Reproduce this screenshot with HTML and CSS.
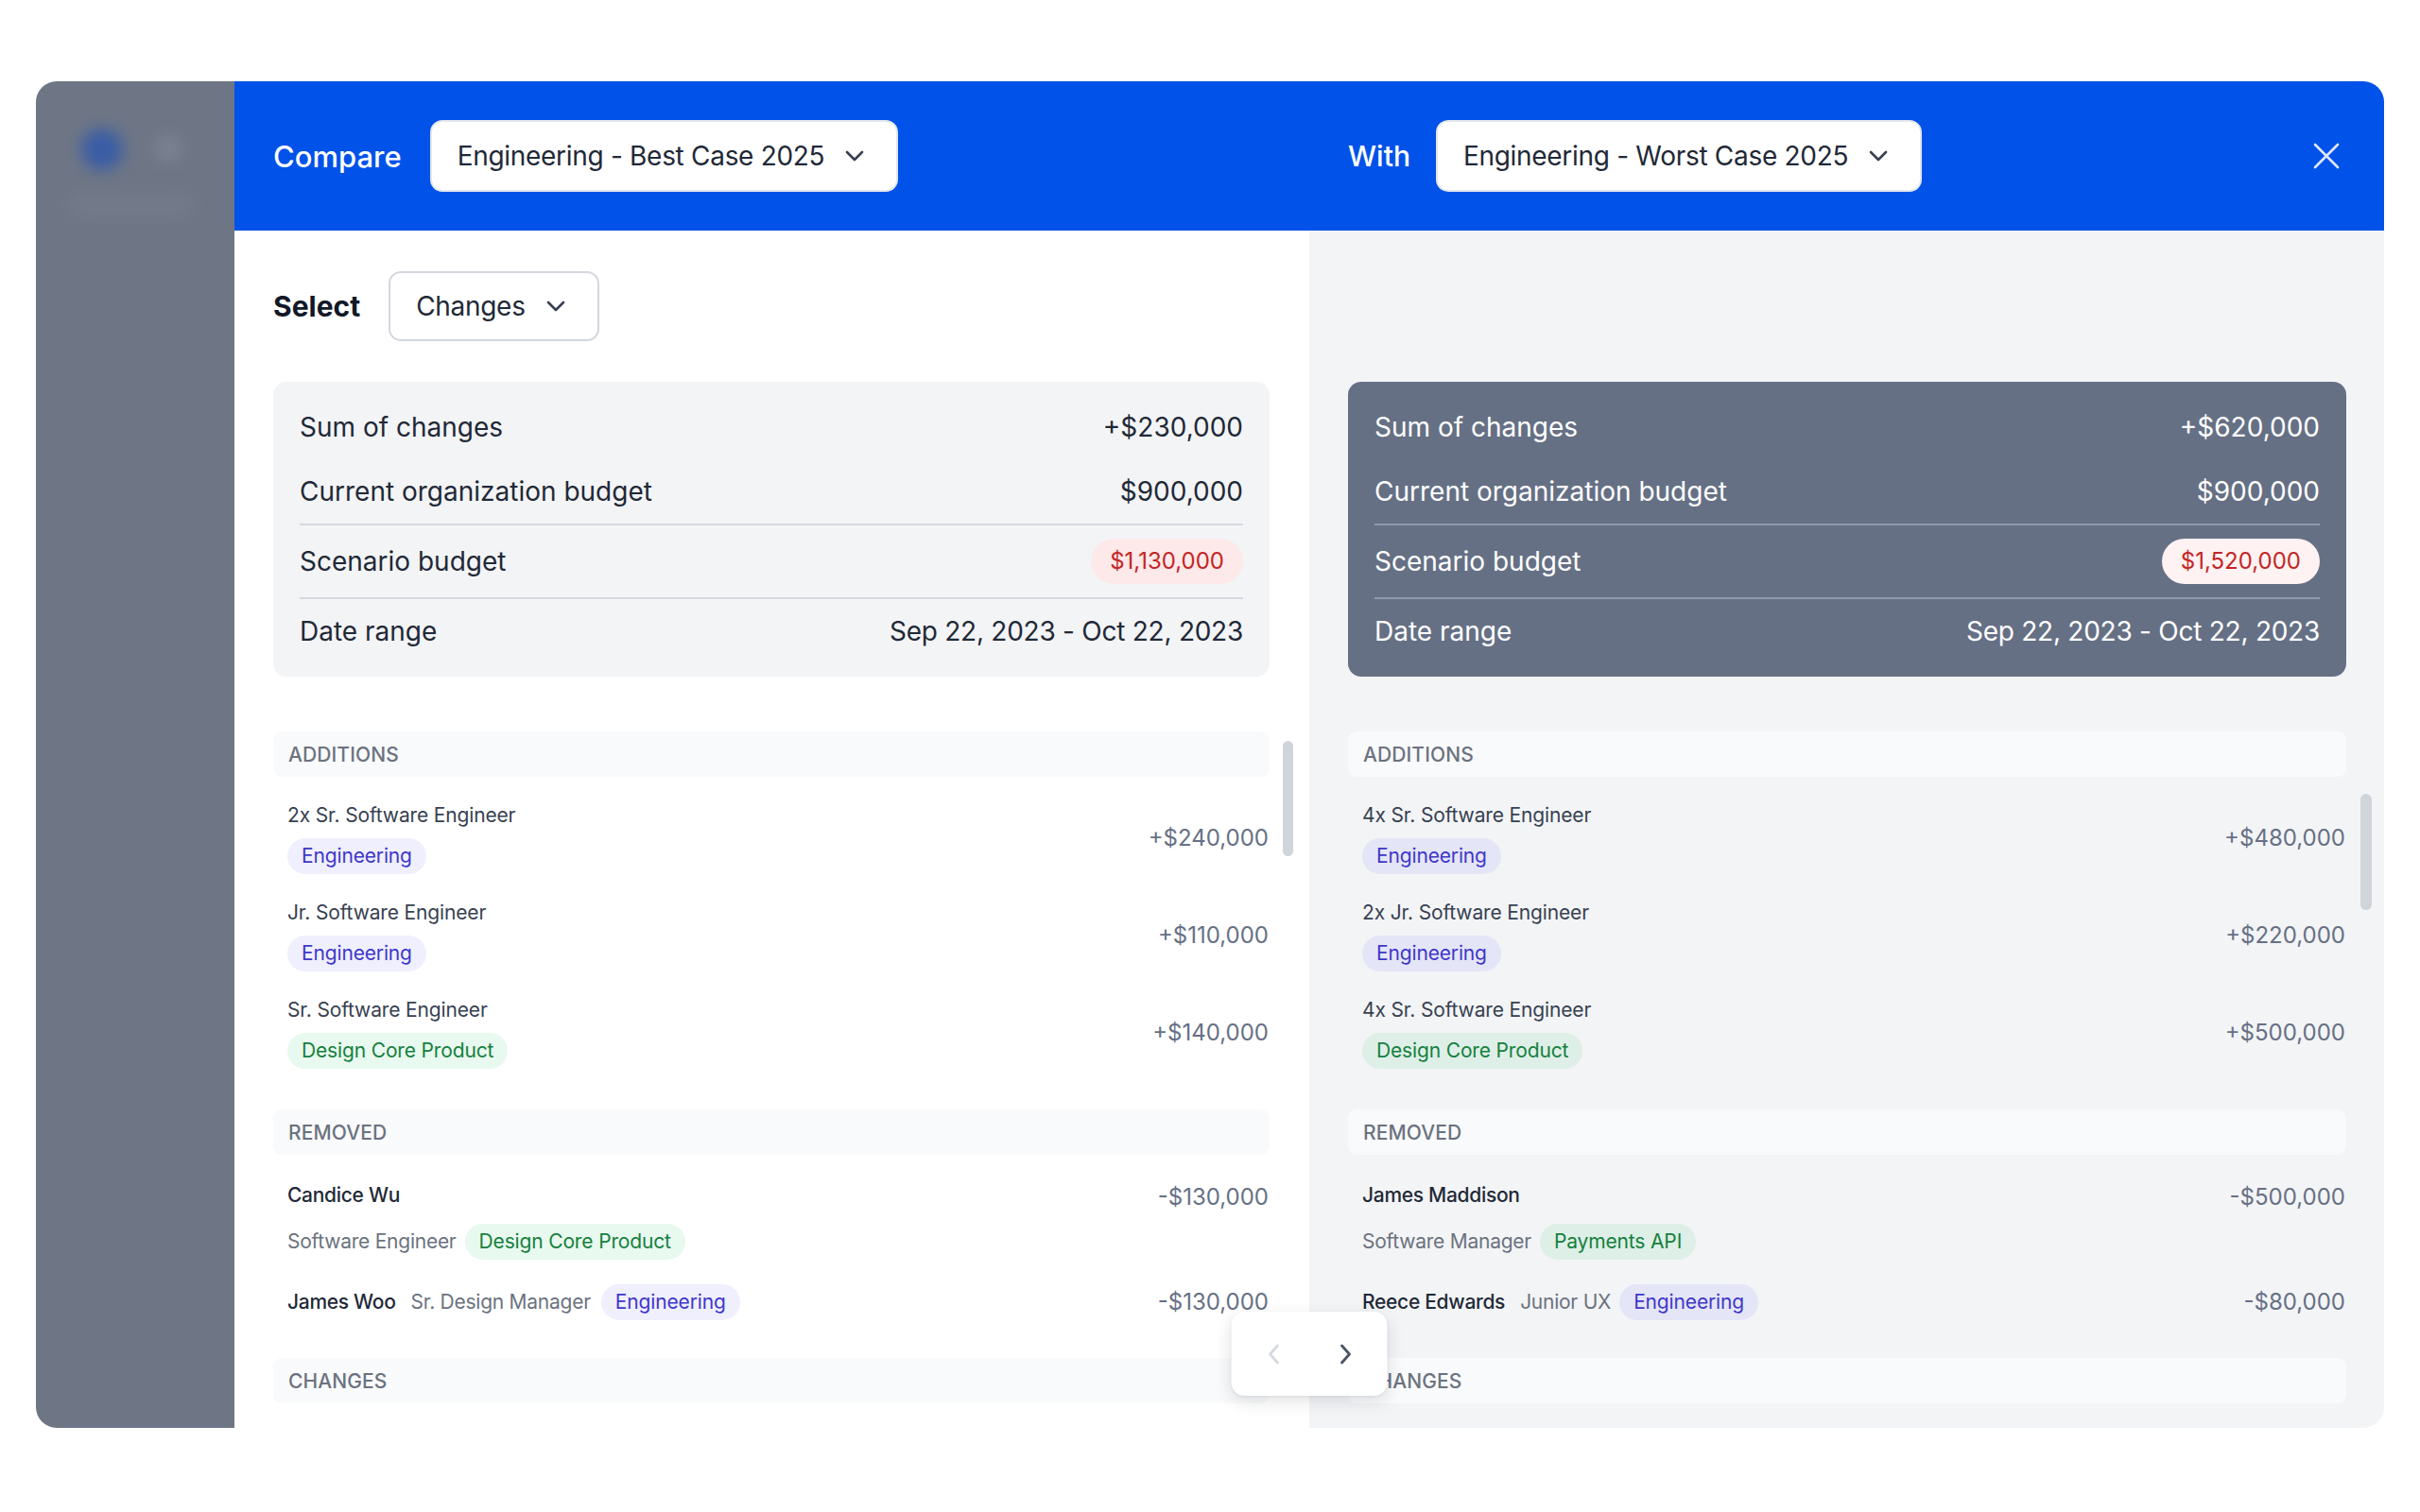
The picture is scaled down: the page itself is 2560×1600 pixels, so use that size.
FILE: index.html
```html
<!DOCTYPE html>
<html lang="en">
<head>
<meta charset="utf-8">
<title>Compare scenarios</title>
<link rel="stylesheet" href="styles.css">
</head>
<body>
<div class="page">
  <div class="frame">
    <aside class="sidebar">
      <span class="blob blob-blue"></span>
      <span class="blob blob-gray"></span>
      <span class="blob-bar"></span>
    </aside>
    <section class="modal">
      <header class="modal-header">
        <div class="hdr-half">
          <span class="hdr-label">Compare</span>
          <button class="dropdown dropdown-lg">
            <span>Engineering - Best Case 2025</span>
            <svg class="chev" viewBox="0 0 20 12" width="20" height="12"><path d="M2 2l8 8 8-8"/></svg>
          </button>
        </div>
        <div class="hdr-half hdr-half-right">
          <span class="hdr-label hdr-label-sm">With</span>
          <button class="dropdown dropdown-lg">
            <span>Engineering - Worst Case 2025</span>
            <svg class="chev" viewBox="0 0 20 12" width="20" height="12"><path d="M2 2l8 8 8-8"/></svg>
          </button>
          <span class="hdr-spacer"></span>
          <svg class="close" viewBox="0 0 28 28" width="28" height="28"><path d="M2 2L26 26M26 2L2 26"/></svg>
        </div>
      </header>

      <div class="modal-body">
        <div class="col col-left">
          <div class="select-row">
            <span class="select-label">Select</span>
            <button class="dropdown">
              <span>Changes</span>
              <svg class="chev" viewBox="0 0 20 12" width="20" height="12"><path d="M2 2l8 8 8-8"/></svg>
            </button>
          </div>

          <div class="summary">
            <div class="sum-row"><span>Sum of changes</span><span>+$230,000</span></div>
            <div class="sum-row"><span>Current organization budget</span><span>$900,000</span></div>
            <div class="sum-row sep"><span>Scenario budget</span><span class="badge">$1,130,000</span></div>
            <div class="sum-row sep"><span>Date range</span><span class="date">Sep 22, 2023 - Oct 22, 2023</span></div>
          </div>

          <div class="lists">
            <div class="section">
              <div class="section-title">Additions</div>
              <div class="items">
                <div class="item">
                  <div class="item-main">
                    <div class="item-title">2x Sr. Software Engineer</div>
                    <div><span class="tag tag-blue">Engineering</span></div>
                  </div>
                  <span class="value">+$240,000</span>
                </div>
                <div class="item">
                  <div class="item-main">
                    <div class="item-title">Jr. Software Engineer</div>
                    <div><span class="tag tag-blue">Engineering</span></div>
                  </div>
                  <span class="value">+$110,000</span>
                </div>
                <div class="item">
                  <div class="item-main">
                    <div class="item-title">Sr. Software Engineer</div>
                    <div><span class="tag tag-green">Design Core Product</span></div>
                  </div>
                  <span class="value">+$140,000</span>
                </div>
              </div>
            </div>

            <div class="section">
              <div class="section-title">Removed</div>
              <div class="items items-removed">
                <div class="item item-top">
                  <div class="item-main">
                    <div class="person">Candice Wu</div>
                    <div class="meta-line"><span class="role">Software Engineer</span><span class="tag tag-green">Design Core Product</span></div>
                  </div>
                  <span class="value value-top">-$130,000</span>
                </div>
                <div class="item">
                  <div class="inline-line">
                    <span class="person">James Woo</span><span class="role">Sr. Design Manager</span><span class="tag tag-blue">Engineering</span>
                  </div>
                  <span class="value">-$130,000</span>
                </div>
              </div>
            </div>

            <div class="section">
              <div class="section-title">Changes</div>
            </div>
          </div>
          <span class="thumb thumb-left"></span>
        </div>

        <div class="col col-right">
          <div class="select-row"></div>

          <div class="summary summary-dark">
            <div class="sum-row"><span>Sum of changes</span><span>+$620,000</span></div>
            <div class="sum-row"><span>Current organization budget</span><span>$900,000</span></div>
            <div class="sum-row sep"><span>Scenario budget</span><span class="badge badge-light">$1,520,000</span></div>
            <div class="sum-row sep"><span>Date range</span><span class="date">Sep 22, 2023 - Oct 22, 2023</span></div>
          </div>

          <div class="lists">
            <div class="section">
              <div class="section-title">Additions</div>
              <div class="items">
                <div class="item">
                  <div class="item-main">
                    <div class="item-title">4x Sr. Software Engineer</div>
                    <div><span class="tag tag-blue">Engineering</span></div>
                  </div>
                  <span class="value">+$480,000</span>
                </div>
                <div class="item">
                  <div class="item-main">
                    <div class="item-title">2x Jr. Software Engineer</div>
                    <div><span class="tag tag-blue">Engineering</span></div>
                  </div>
                  <span class="value">+$220,000</span>
                </div>
                <div class="item">
                  <div class="item-main">
                    <div class="item-title">4x Sr. Software Engineer</div>
                    <div><span class="tag tag-green">Design Core Product</span></div>
                  </div>
                  <span class="value">+$500,000</span>
                </div>
              </div>
            </div>

            <div class="section">
              <div class="section-title">Removed</div>
              <div class="items items-removed">
                <div class="item item-top">
                  <div class="item-main">
                    <div class="person">James Maddison</div>
                    <div class="meta-line"><span class="role">Software Manager</span><span class="tag tag-green">Payments API</span></div>
                  </div>
                  <span class="value value-top">-$500,000</span>
                </div>
                <div class="item">
                  <div class="inline-line">
                    <span class="person">Reece Edwards</span><span class="role role-tight">Junior UX</span><span class="tag tag-blue">Engineering</span>
                  </div>
                  <span class="value">-$80,000</span>
                </div>
              </div>
            </div>

            <div class="section">
              <div class="section-title">Changes</div>
            </div>
          </div>
          <span class="thumb thumb-right"></span>
        </div>

        <div class="pager">
          <svg class="pager-chev disabled" viewBox="0 0 14 22" width="14" height="22"><path d="M11 2L3 11l8 9"/></svg>
          <svg class="pager-chev" viewBox="0 0 14 22" width="14" height="22"><path d="M3 2l8 9-8 9"/></svg>
        </div>
      </div>
    </section>
  </div>
</div>
</body>
</html>
```

FILE: styles.css
```css
* { box-sizing: border-box; }

html, body {
  margin: 0;
  padding: 0;
  background: #ffffff;
  font-family: Inter, "Noto Sans", "Liberation Sans", sans-serif;
  color: #1f2937;
}

.page {
  width: 2560px;
  height: 1600px;
  padding: 86px 38px 0 38px;
}

.frame {
  display: flex;
  height: 1425px;
  border-radius: 22px;
  overflow: hidden;
}

/* ---------- dimmed app sidebar ---------- */
.sidebar {
  width: 210px;
  flex: none;
  background: #6e7686;
  position: relative;
  overflow: hidden;
}
.blob {
  position: absolute;
  border-radius: 50%;
  filter: blur(8px);
}
.blob-blue {
  left: 48px;
  top: 50px;
  width: 44px;
  height: 44px;
  background: #3a5da6;
}
.blob-gray {
  left: 125px;
  top: 56px;
  width: 30px;
  height: 30px;
  background: #7a8291;
}
.blob-bar {
  position: absolute;
  left: 36px;
  top: 118px;
  width: 130px;
  height: 26px;
  background: #737b8a;
  filter: blur(9px);
}

/* ---------- modal ---------- */
.modal {
  flex: 1;
  display: flex;
  flex-direction: column;
  min-width: 0;
}

.modal-header {
  height: 158px;
  flex: none;
  background: #0152e9;
  display: grid;
  grid-template-columns: 1fr 1fr;
}
.hdr-half {
  display: flex;
  align-items: center;
  gap: 30px;
  padding-left: 41px;
  padding-right: 47px;
}
.hdr-half-right { gap: 27px; }
.hdr-label {
  color: #ffffff;
  font-size: 31px;
  font-weight: 500;
}
.hdr-label-sm { font-size: 30px; }
.hdr-spacer { flex: 1; }
.close {
  fill: none;
  stroke: #dfe7ff;
  stroke-width: 2.6;
  stroke-linecap: round;
}

.dropdown {
  display: inline-flex;
  align-items: center;
  gap: 22px;
  height: 74px;
  padding: 0 34px 0 27px;
  background: #ffffff;
  border: 2px solid #d3d7de;
  border-radius: 13px;
  font-family: inherit;
  font-size: 28px;
  font-weight: 400;
  letter-spacing: -0.3px;
  color: #1f2937;
  cursor: pointer;
}
.dropdown-lg {
  height: 76px;
  border-color: #e3e6ec;
}
.chev {
  fill: none;
  stroke: #374151;
  stroke-width: 2.6;
  stroke-linecap: round;
  stroke-linejoin: round;
}

/* ---------- body columns ---------- */
.modal-body {
  flex: 1;
  display: grid;
  grid-template-columns: 1fr 1fr;
  position: relative;
  min-height: 0;
}
.col {
  position: relative;
  overflow: hidden;
  padding: 0 42px 0 41px;
}
.col-left { background: #ffffff; }
.col-right { background: #f3f4f6; padding-right: 40px; }

.select-row {
  margin-top: 43px;
  height: 74px;
  display: flex;
  align-items: center;
  gap: 30px;
}
.select-label {
  font-size: 30px;
  font-weight: 700;
  color: #111827;
}

/* ---------- summary card ---------- */
.summary {
  margin-top: 43px;
  background: #f3f4f6;
  border-radius: 14px;
  padding: 14px 28px;
}
.sum-row {
  display: flex;
  justify-content: space-between;
  align-items: center;
  padding: 14px 0;
  font-size: 28px;
  line-height: 40px;
  color: #1f2937;
}
.sum-row.sep { border-top: 2px solid #d5d9e0; }
.date { letter-spacing: -0.25px; }

.badge {
  display: inline-flex;
  align-items: center;
  height: 48px;
  padding: 0 20px;
  border-radius: 24px;
  background: #fde9e9;
  color: #c42525;
  font-size: 24px;
  line-height: 32px;
}

.summary-dark {
  background: #667085;
}
.summary-dark .sum-row { color: #ffffff; }
.summary-dark .sum-row.sep { border-top-color: #8f99ad; }
.badge-light { background: #fef2f2; color: #c42525; }

/* ---------- lists ---------- */
.lists { margin-top: 58px; }

.section + .section { margin-top: 17px; }

.section-title {
  height: 48px;
  display: flex;
  align-items: center;
  padding: 0 16px;
  background: #f9fafb;
  border-radius: 9px;
  font-size: 21px;
  font-weight: 500;
  letter-spacing: 0.1px;
  text-transform: uppercase;
  color: #6b7280;
}

.items { padding: 13px 0; }
.items-removed { padding-top: 15px; padding-bottom: 10px; }

.item {
  display: flex;
  justify-content: space-between;
  align-items: center;
  padding: 13px 1px 13px 15px;
}
.item-top { align-items: flex-start; }

.item-main {
  display: flex;
  flex-direction: column;
  align-items: flex-start;
}
.item-title {
  font-size: 21px;
  line-height: 30px;
  letter-spacing: -0.15px;
  color: #374151;
  margin-bottom: 9px;
}

.tag {
  display: inline-flex;
  align-items: center;
  height: 38px;
  padding: 0 15px;
  border-radius: 19px;
  font-size: 21px;
  line-height: 30px;
  letter-spacing: -0.15px;
}
.tag-blue {
  background: rgba(99, 102, 241, 0.1);
  color: #3f37c9;
}
.tag-green {
  background: rgba(34, 197, 94, 0.1);
  color: #15803d;
}

.value {
  font-size: 24px;
  line-height: 30px;
  color: #667085;
}
.value-top { margin-top: 2px; }

.person {
  font-size: 21px;
  line-height: 30px;
  font-weight: 500;
  letter-spacing: -0.3px;
  color: #1f2937;
}
.role {
  font-size: 21px;
  line-height: 30px;
  letter-spacing: -0.25px;
  color: #6b7280;
}
.meta-line {
  display: flex;
  align-items: center;
  gap: 9px;
  margin-top: 15px;
}
.inline-line {
  display: flex;
  align-items: center;
}
.inline-line .person { margin-right: 16px; }
.inline-line .role { margin-right: 11px; }
.inline-line .role-tight { margin-right: 9px; }

/* ---------- scroll thumbs (overlay) ---------- */
.thumb {
  position: absolute;
  width: 11px;
  border-radius: 6px;
  background: #d0d4db;
}
.thumb-left {
  right: 17px;
  top: 540px;
  height: 122px;
}
.thumb-right {
  right: 13px;
  top: 596px;
  width: 12px;
  height: 123px;
}

/* ---------- floating pager ---------- */
.pager {
  position: absolute;
  left: 50%;
  bottom: 34px;
  transform: translateX(-50%);
  width: 165px;
  height: 89px;
  background: #ffffff;
  border-radius: 14px;
  box-shadow: 0 6px 18px rgba(17, 24, 39, 0.12), 0 1px 3px rgba(17, 24, 39, 0.06);
  display: flex;
  align-items: center;
  justify-content: center;
  gap: 62px;
  z-index: 2;
}
.pager-chev {
  fill: none;
  stroke: #4b5563;
  stroke-width: 2.8;
  stroke-linecap: round;
  stroke-linejoin: round;
}
.pager-chev.disabled { stroke: #d5d9e0; }
```
